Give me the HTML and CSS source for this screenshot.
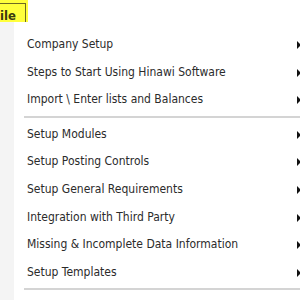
FILE: index.html
```html
<!DOCTYPE html>
<html lang="en">
<head>
  <meta charset="UTF-8">
  <title>Hinawi - File menu</title>
  <link rel="stylesheet" href="styles.css">
</head>
<body>
  <div class="menubar">
    <div class="menubar-item menubar-item_active">
      <span class="menubar-label">File</span>
    </div>
  </div>
  <div class="dropdown">
    <ul class="menu-list">
      <li class="menu-item">Company Setup</li>
      <li class="menu-item">Steps to Start Using Hinawi Software</li>
      <li class="menu-item">Import \ Enter lists and Balances</li>
      <li class="menu-sep"></li>
      <li class="menu-item">Setup Modules</li>
      <li class="menu-item">Setup Posting Controls</li>
      <li class="menu-item">Setup General Requirements</li>
      <li class="menu-item">Integration with Third Party</li>
      <li class="menu-item">Missing &amp; Incomplete Data Information</li>
      <li class="menu-item">Setup Templates</li>
      <li class="menu-sep"></li>
    </ul>
  </div>
</body>
</html>
```

FILE: styles.css
```css
* {
  margin: 0;
  padding: 0;
  box-sizing: border-box;
}

body {
  width: 300px;
  height: 300px;
  overflow: hidden;
  background-color: #fff;
  font-family: "DejaVu Sans Condensed", "DejaVu Sans", Tahoma, sans-serif;
  font-stretch: condensed;
  font-size: 12px;
  color: #2b2b2b;
}

.menubar {
  display: flex;
  height: 22px;
}

.menubar-item {
  width: 37px;
  height: 22px;
  margin-left: -9px;
  padding: 3px 2px 0 0;
  background-color: #ffff3c;
}

/* hovered tab gets a dark inner frame */
.menubar-label {
  display: block;
  height: 19px;
  padding: 4px 0 0 0;
  border: 1px solid #6e6a24;
  border-bottom: 0;
  font-size: 13px;
  line-height: 15px;
  font-weight: bold;
  color: #3a3a10;
}

.dropdown {
  display: flex;
  height: 278px;
  background: linear-gradient(to right, #f4f4f4 0, #f4f4f4 14px, #fff 14px);
}

.menu-list {
  list-style-type: none;
  flex: 1;
  padding-left: 24px;
  padding-top: 9px;
}

.menu-item {
  position: relative;
  height: 27.6px;
  line-height: 27.6px;
  padding-left: 3px;
  white-space: nowrap;
}

/* submenu arrow */
.menu-item:after {
  content: '';
  position: absolute;
  right: -1px;
  top: 10px;
  border-left: 4px solid #111;
  border-top: 4px solid transparent;
  border-bottom: 4px solid transparent;
}

.menu-sep {
  height: 2px;
  margin: 2px 0 3px;
  background-color: #d4d4d4;
}
```
